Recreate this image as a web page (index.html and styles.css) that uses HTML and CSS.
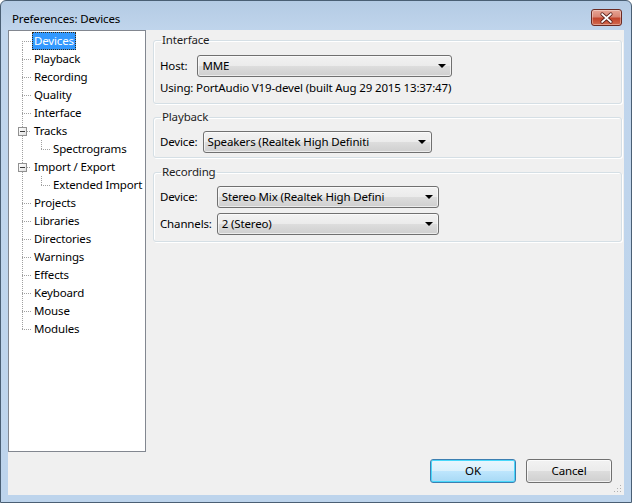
FILE: index.html
```html
<!DOCTYPE html>
<html>
<head>
<meta charset="utf-8">
<link rel="stylesheet" href="styles.css">
</head>
<body>
<div class="window">
  <div class="titlebar">
    <span class="title">Preferences: Devices</span>
    <div class="close">
      <svg width="30" height="16" viewBox="0 0 30 16">
        <path d="M10.5 4 L19.5 12 M19.5 4 L10.5 12" stroke="#5a1f1a" stroke-width="3.6" stroke-linecap="round"/>
        <path d="M10.5 4 L19.5 12 M19.5 4 L10.5 12" stroke="#ffffff" stroke-width="2" stroke-linecap="round"/>
      </svg>
    </div>
  </div>
  <div class="client">
    <div class="tree">
      <ul class="root">
        <li class="item first"><span class="label selected">Devices</span></li>
        <li class="item"><span class="label">Playback</span></li>
        <li class="item"><span class="label">Recording</span></li>
        <li class="item"><span class="label">Quality</span></li>
        <li class="item"><span class="label">Interface</span></li>
        <li class="item parent"><span class="expander"></span><span class="label">Tracks</span>
          <ul class="children">
            <li class="item last"><span class="label">Spectrograms</span></li>
          </ul>
        </li>
        <li class="item parent"><span class="expander"></span><span class="label">Import / Export</span>
          <ul class="children">
            <li class="item last"><span class="label">Extended Import</span></li>
          </ul>
        </li>
        <li class="item"><span class="label">Projects</span></li>
        <li class="item"><span class="label">Libraries</span></li>
        <li class="item"><span class="label">Directories</span></li>
        <li class="item"><span class="label">Warnings</span></li>
        <li class="item"><span class="label">Effects</span></li>
        <li class="item"><span class="label">Keyboard</span></li>
        <li class="item"><span class="label">Mouse</span></li>
        <li class="item last"><span class="label">Modules</span></li>
      </ul>
    </div>
    <div class="panels">
      <fieldset class="group group-interface">
        <legend>Interface</legend>
        <div class="row row-host">
          <span class="field-label">Host:</span>
          <div class="combo combo-host"><span>MME</span><i class="arrow"></i></div>
        </div>
        <div class="info">Using: PortAudio V19-devel (built Aug 29 2015 13:37:47)</div>
      </fieldset>
      <fieldset class="group group-playback">
        <legend>Playback</legend>
        <div class="row row-play">
          <span class="field-label">Device:</span>
          <div class="combo combo-play"><span>Speakers (Realtek High Definiti</span><i class="arrow"></i></div>
        </div>
      </fieldset>
      <fieldset class="group group-recording">
        <legend>Recording</legend>
        <div class="rec-grid">
          <span class="field-label">Device:</span>
          <div class="combo combo-rec"><span>Stereo Mix (Realtek High Defini</span><i class="arrow"></i></div>
          <span class="field-label">Channels:</span>
          <div class="combo combo-rec"><span>2 (Stereo)</span><i class="arrow"></i></div>
        </div>
      </fieldset>
    </div>
    <div class="footer">
      <div class="btn btn-default">OK</div>
      <div class="btn">Cancel</div>
      <div class="grip"></div>
    </div>
  </div>
</div>
</body>
</html>
```
FILE: styles.css
```css
* { box-sizing: border-box; }
html, body { margin: 0; padding: 0; }
body {
  width: 632px;
  height: 503px;
  overflow: hidden;
  font-family: "Noto Sans", "Open Sans", sans-serif;
  font-size: 11.5px;
  letter-spacing: -0.15px;
  color: #000;
  background: #fff;
}
.window {
  width: 632px;
  height: 503px;
  border: 1px solid #4a5f74;
  border-radius: 6px 6px 0 0;
  background: linear-gradient(to bottom, #b4cbe4 0px, #c0d5ec 30px, #bdd4ec 100%);
  display: flex;
  flex-direction: column;
  padding: 0 7px 7px 7px;
}
.titlebar {
  height: 29px;
  flex: none;
  display: flex;
  align-items: flex-start;
  justify-content: space-between;
}
.title {
  margin-top: 10px;
  margin-left: 4px;
  line-height: 16px;
  color: #000;
}
.close {
  margin-top: 8px;
  margin-right: 2px;
  width: 31px;
  height: 17px;
  border: 1px solid #6b2a22;
  border-radius: 3px;
  background: linear-gradient(to bottom, #e8a595 0%, #d98675 45%, #c2442c 55%, #d36b4f 100%);
  box-shadow: inset 0 0 0 1px rgba(255,255,255,0.35);
  display: flex;
  align-items: center;
  justify-content: center;
}
.close svg { display: block; }
.client {
  flex: 1;
  background: #f0f0f0;
  display: grid;
  grid-template-columns: 138px 1fr;
  grid-template-rows: 422px 1fr;
}
/* tree */
.tree {
  grid-row: 1;
  grid-column: 1;
  background: #fff;
  border: 1px solid #828790;
  padding-top: 1px;
  overflow: hidden;
}
.tree ul { list-style: none; margin: 0; padding: 0; }
.tree .item {
  position: relative;
  padding-left: 23px;
  line-height: 18px;
}
.tree .children { margin-left: -4px; }
.tree .item::before {
  content: "";
  position: absolute;
  left: 13px;
  top: 9px;
  width: 9px;
  height: 1px;
  background: repeating-linear-gradient(to right, #a0a0a0 0 1px, transparent 1px 2px);
}
.tree .item::after {
  content: "";
  position: absolute;
  left: 13px;
  top: 0;
  bottom: 0;
  width: 1px;
  background: repeating-linear-gradient(to bottom, #a0a0a0 0 1px, transparent 1px 2px);
}
.tree .item.first::after { top: 9px; }
.tree .item.last::after { bottom: auto; height: 10px; }
.tree .label {
  display: inline-block;
  height: 18px;
  padding: 0 2px;
  white-space: nowrap;
}
.tree .label.selected {
  background: #3399ff;
  color: #fff;
  outline: 1px dotted #3a2a10;
  outline-offset: -1px;
}
.tree .expander {
  position: absolute;
  left: 9px;
  top: 5px;
  width: 9px;
  height: 9px;
  border: 1px solid #919191;
  background: linear-gradient(to bottom right, #ffffff 0%, #e0e0e0 100%);
  z-index: 2;
}
.tree .expander::after {
  content: "";
  position: absolute;
  left: 1px;
  top: 3px;
  width: 5px;
  height: 1px;
  background: #3a3a3a;
}
.tree .parent::before { left: 18px; width: 4px; }
/* panels */
.panels {
  grid-row: 1;
  grid-column: 2;
  padding: 2px 2px 0 7px;
  display: flex;
  flex-direction: column;
}
.group {
  margin: 0;
  border: 1px solid #d5dfe5;
  border-radius: 3px;
  box-shadow: inset 1px 1px 0 #fff, 1px 1px 0 #fff;
  padding: 0 6px 0 6px;
  min-width: 0;
}
.group legend {
  padding: 0 1px 0 1px;
  margin-left: 1px;
  line-height: 16px;
  color: #1e1e1e;
}
.row {
  display: flex;
  align-items: center;
}
.field-label { white-space: nowrap; line-height: 16px; }
.combo {
  position: relative;
  height: 22px;
  border: 1px solid #707070;
  border-radius: 3px;
  background: linear-gradient(to bottom, #f2f2f2 0%, #ebebeb 50%, #dddddd 50%, #cfcfcf 100%);
  box-shadow: inset 0 0 0 1px rgba(255,255,255,0.6);
  padding-left: 4px;
  line-height: 20px;
  white-space: nowrap;
  overflow: hidden;
}
.combo .arrow {
  position: absolute;
  right: 5px;
  top: 8px;
  width: 0;
  height: 0;
  border-left: 4px solid transparent;
  border-right: 4px solid transparent;
  border-top: 4px solid #000;
}
.group-interface { padding-bottom: 7px; }
.row-host { margin-top: 7px; gap: 10px; }
.combo-host { width: 255px; }
.info { margin-top: 3px; line-height: 16px; }
.group-playback { margin-top: 5px; padding-bottom: 4px; }
.row-play { margin-top: 6px; gap: 5px; }
.combo-play { width: 229px; }
.group-recording { margin-top: 6px; padding-bottom: 6px; }
.rec-grid {
  margin-top: 6px;
  display: grid;
  grid-template-columns: auto 222px;
  justify-content: start;
  column-gap: 5px;
  row-gap: 5px;
  align-items: center;
}
/* footer */
.footer {
  grid-row: 2;
  grid-column: 1 / span 2;
  display: flex;
  justify-content: flex-end;
  align-items: flex-start;
  padding: 7px 12px 0 0;
  gap: 10px;
  position: relative;
}
.btn {
  width: 86px;
  height: 24px;
  border: 1px solid #707070;
  border-radius: 3px;
  background: linear-gradient(to bottom, #f2f2f2 0%, #ebebeb 50%, #dddddd 50%, #cfcfcf 100%);
  box-shadow: inset 0 0 0 1px rgba(255,255,255,0.7);
  text-align: center;
  line-height: 22px;
}
.btn-default {
  border-color: #3c7fb1;
  box-shadow: inset 0 0 0 1px #48d8fb;
  background: linear-gradient(to bottom, #eaf6fd 0%, #d9f0fc 50%, #bee6fd 50%, #a7d9f5 100%);
}
.grip {
  position: absolute;
  right: 3px;
  bottom: 3px;
  width: 8px;
  height: 8px;
  background:
    radial-gradient(circle, #b0b0b0 0.7px, transparent 0.8px) 0 0 / 3px 3px;
  clip-path: polygon(100% 0, 100% 100%, 0 100%);
}
```
